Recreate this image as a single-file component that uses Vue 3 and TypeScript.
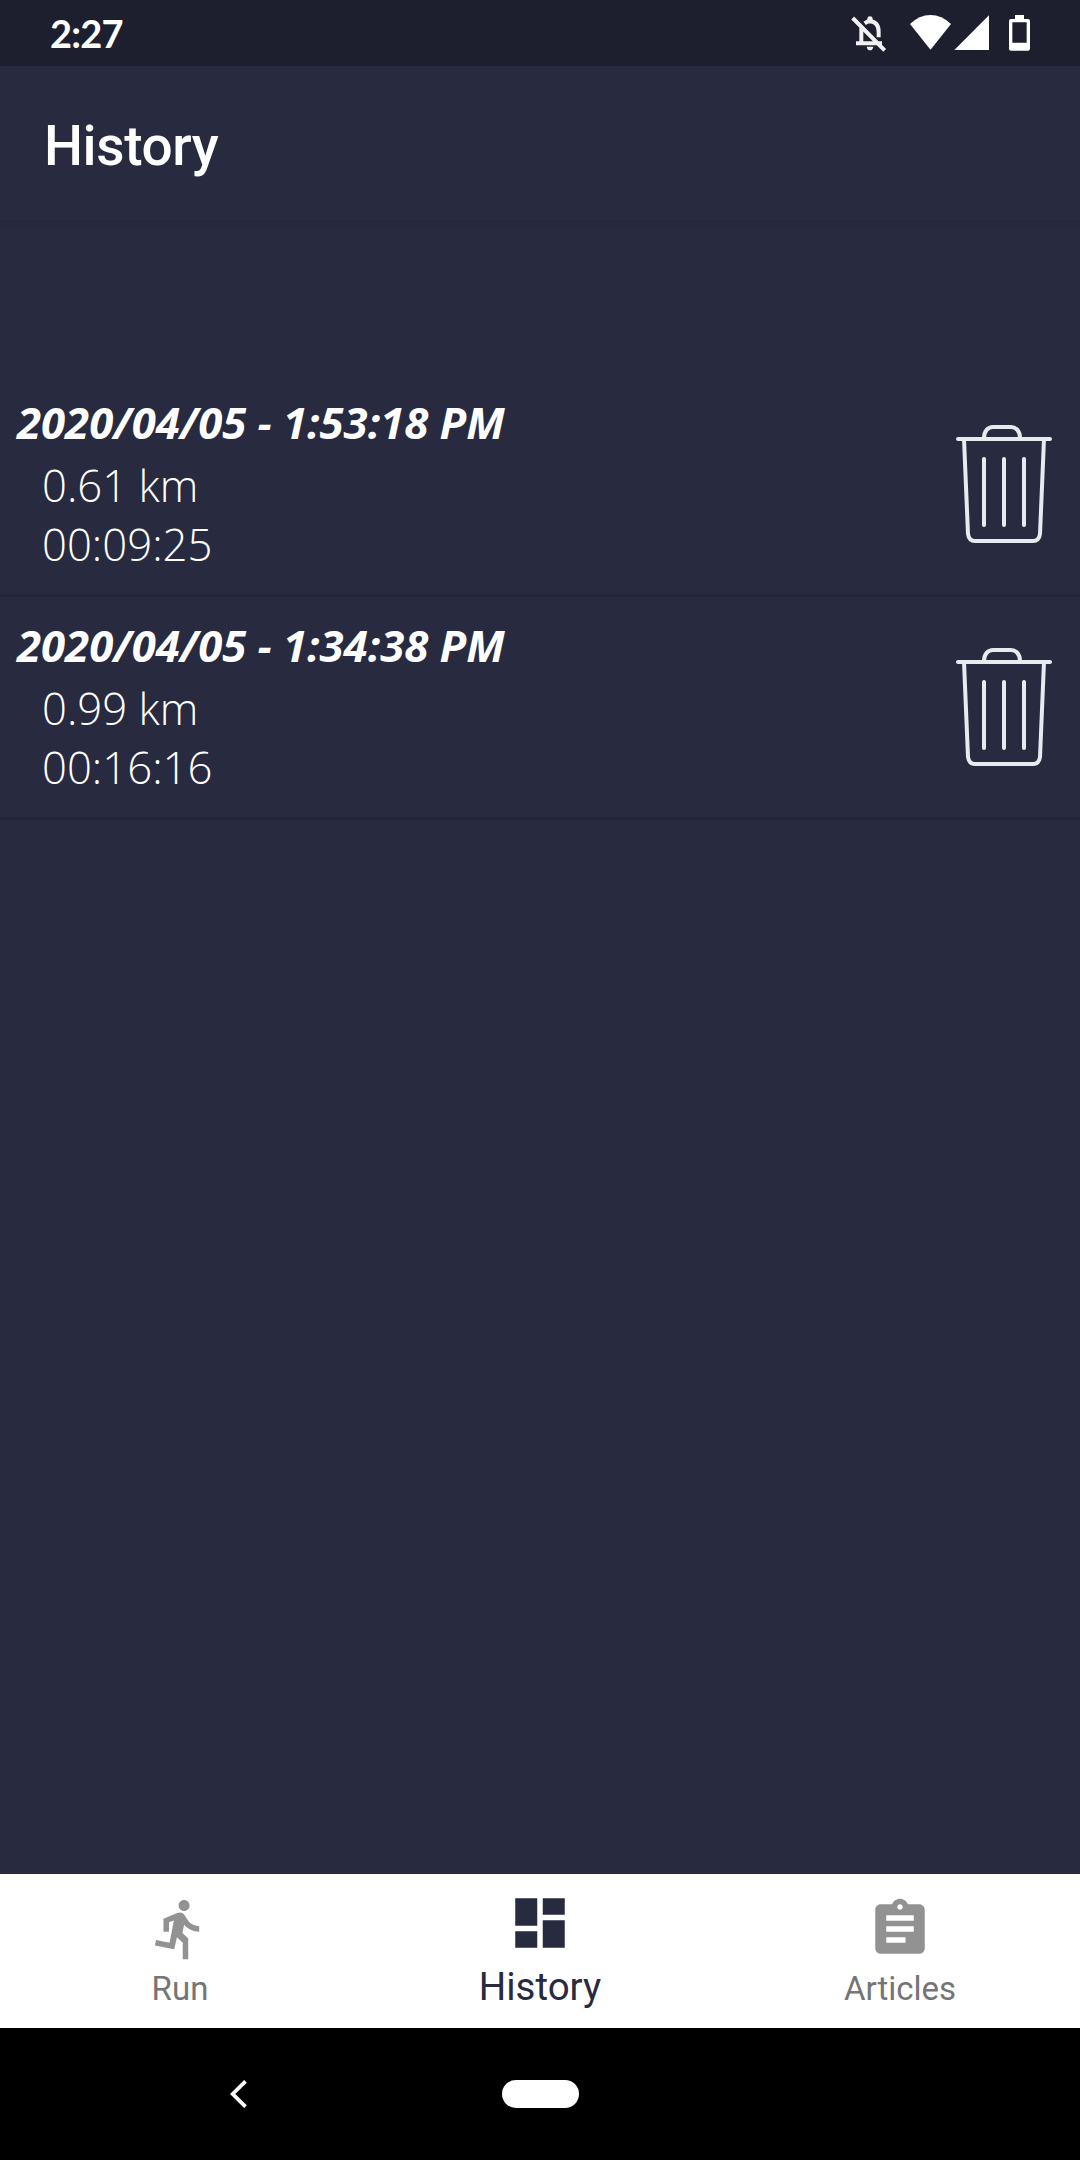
<script setup lang="ts">
interface RunEntry {
  date: string
  distance: string
  duration: string
}

const runs: RunEntry[] = [
  { date: '2020/04/05 - 1:53:18 PM', distance: '0.61 km', duration: '00:09:25' },
  { date: '2020/04/05 - 1:34:38 PM', distance: '0.99 km', duration: '00:16:16' },
]

interface Tab {
  label: string
  path: string
  active: boolean
}

const tabs: Tab[] = [
  {
    label: 'Run',
    active: false,
    path: 'M13.49 5.48c1.1 0 2-.9 2-2s-.9-2-2-2-2 .9-2 2 .9 2 2 2zm-3.6 13.9l1-4.4 2.1 2v6h2v-7.5l-2.1-2 .6-3c1.3 1.5 3.3 2.5 5.5 2.5v-2c-1.9 0-3.5-1-4.3-2.4l-1-1.6c-.4-.6-1-1-1.7-1-.3 0-.5.1-.8.1l-5.2 2.2v4.7h2v-3.4l1.8-.7-1.6 8.1-4.9-1-.4 2 7 1.4z',
  },
  {
    label: 'History',
    active: true,
    path: 'M3 13h8V3H3v10zm0 8h8v-6H3v6zm10 0h8V11h-8v10zm0-18v6h8V3h-8z',
  },
  {
    label: 'Articles',
    active: false,
    path: 'M19 3h-4.18C14.4 1.84 13.3 1 12 1c-1.3 0-2.4.84-2.82 2H5c-1.1 0-2 .9-2 2v14c0 1.1.9 2 2 2h14c1.1 0 2-.9 2-2V5c0-1.1-.9-2-2-2zm-7 0c.55 0 1 .45 1 1s-.45 1-1 1-1-.45-1-1 .45-1 1-1zm2 14H7v-2h7v2zm3-4H7v-2h10v2zm0-4H7V7h10v2z',
  },
]
</script>

<template>
  <div class="screen">
    <div class="status">
      <span class="clock">2:27</span>
      <svg class="status-icons" viewBox="0 0 780 198" width="260" height="66" fill="none">
        <g stroke="#f1f1f3" stroke-width="12">
          <path d="M124 84V130M108 130H186M134 70Q142 64 150 64Q176 66 176 96V112" />
          <path d="M98 54L194 151" />
        </g>
        <path d="M142 64V57a8 8 0 0 1 16 0V64zM140 140H160Q158 151 150 151T140 140z" fill="#f1f1f3" />
        <path d="M270 72Q298 45 331.500 45T393 72L331.500 149z" fill="#fff" />
        <path d="M507 46V150H403z" fill="#fff" />
        <path fill-rule="evenodd" d="M585 45h27v12h12q6 0 6 6v83q0 6-6 6h-51q-6 0-6-6v-83q0-6 6-6h12zM577 67v61h43v-61z" fill="#fff" />
      </svg>
    </div>

    <header class="appbar"><h1>History</h1></header>

    <main class="content">
      <div v-for="run in runs" :key="run.date" class="row">
        <div class="details">
          <div class="date">{{ run.date }}</div>
          <div class="value">{{ run.distance }}</div>
          <div class="value">{{ run.duration }}</div>
        </div>
        <svg class="trash" viewBox="0 0 96 120" width="96" height="120">
          <g fill="none" stroke="#e6ebef" stroke-width="4" stroke-linecap="round">
            <path d="M2 15H94" />
            <path d="M28 14C28 7 32 3 37 3H55C60 3 64 7 64 14" stroke-linecap="butt" />
            <path d="M8 15L12 110Q13 117 19 117H77Q83 117 84 110L88 15" stroke-linecap="butt" />
            <path d="M28 35V101M48 35V101M68 35V101" />
          </g>
        </svg>
      </div>
    </main>

    <nav class="tabs">
      <div v-for="tab in tabs" :key="tab.label" class="tab" :class="{ active: tab.active }">
        <svg viewBox="0 0 24 24" width="66" height="66"><path :d="tab.path" fill="currentColor" /></svg>
        <span>{{ tab.label }}</span>
      </div>
    </nav>

    <div class="system">
      <svg class="back" viewBox="0 0 17 28" width="17" height="28">
        <path d="M15.500 1.300L2.700 14L15.500 26.700" fill="none" stroke="#fff" stroke-width="3.800" />
      </svg>
      <div class="pill"></div>
    </div>
  </div>
</template>

<style>
body {
  background: #282a40;
}
</style>

<style scoped>
.screen {
  display: flex;
  flex-direction: column;
  width: 1080px;
  height: 2160px;
  overflow: hidden;
  background: #282a40;
  color: #fff;
  font-family: Roboto, sans-serif;
}
.status {
  display: flex;
  justify-content: space-between;
  height: 66px;
  flex: none;
  background: #1d1f2f;
}
.clock {
  padding-left: 50px;
  font: 700 38px/66px Lato, sans-serif;
  letter-spacing: -0.8px;
}
.appbar {
  flex: none;
  height: 154px;
  padding-left: 44px;
  box-sizing: border-box;
}
.appbar h1 {
  margin: 0;
  font-size: 55px;
  font-weight: 500;
  line-height: 161px;
  letter-spacing: -0.4px;
}
.content {
  flex: 1;
  padding-top: 154px;
  background: linear-gradient(#25273a, #282a40 16px);
}
.row {
  display: flex;
  justify-content: space-between;
  height: 223px;
  box-sizing: border-box;
  border-bottom: 3px solid #232538;
}
.details {
  padding: 17px 0 0 17px;
  font-family: 'Open Sans', sans-serif;
  font-size: 43.7px;
}
.date {
  font-weight: 700;
  font-style: italic;
  line-height: 62px;
  margin-bottom: 3px;
}
.value {
  padding-left: 25px;
  font-weight: 300;
  line-height: 59px;
}
.trash {
  margin: 50px 28px 0 0;
}
.tabs {
  display: flex;
  flex: none;
  height: 154px;
  background: #fff;
}
.tab {
  flex: 1;
  display: flex;
  flex-direction: column;
  align-items: center;
  padding-top: 22px;
  color: #929292;
}
.tab svg {
  flex: none;
}
.tab span {
  color: #757575;
  font-size: 33px;
  line-height: 40px;
  margin-top: 7px;
}
.tab.active {
  padding-top: 16px;
  color: #282a40;
}
.tab.active span {
  color: #282a40;
  font-size: 38.5px;
  line-height: 46px;
  margin-top: 8px;
}
.system {
  display: flex;
  align-items: center;
  flex: none;
  height: 132px;
  background: #000;
}
.back {
  margin-left: 230px;
}
.pill {
  width: 77px;
  height: 28px;
  margin-left: 255px;
  border-radius: 14px;
  background: #fff;
}
</style>
